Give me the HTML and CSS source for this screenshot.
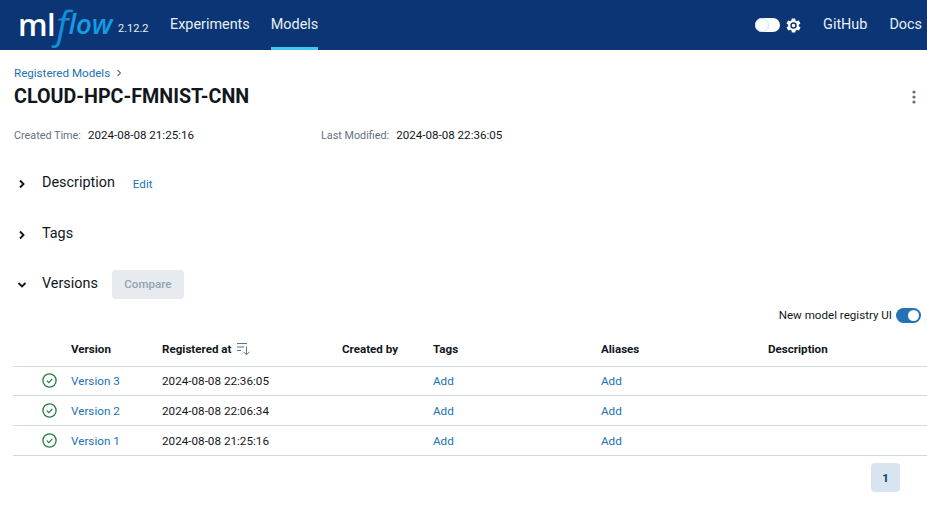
FILE: index.html
```html
<!DOCTYPE html>
<html lang="en">
<head>
<meta charset="utf-8">
<title>MLflow</title>
<link rel="stylesheet" href="styles.css">
</head>
<body>
<header class="topbar">
  <div class="logo"><span class="logo-ml">ml</span><span class="logo-f">f</span><span class="logo-flow">low</span></div>
  <span class="version-no">2.12.2</span>
  <nav class="nav-main">
    <a class="nav-link">Experiments</a>
    <a class="nav-link active">Models</a>
  </nav>
  <div class="nav-right">
    <span class="theme-switch"><span class="theme-knob"></span></span>
    <svg class="gear" width="17" height="17" viewBox="0 0 24 24"><path fill="#fff" fill-rule="evenodd" d="M19.4 13c.1-.3.1-.7.1-1s0-.7-.1-1l2.100-1.600c.2-.2.2-.4.1-.6l-2-3.500c-.1-.2-.4-.3-.6-.2l-2.500 1c-.5-.4-1.100-.7-1.700-1l-.4-2.600c0-.3-.2-.5-.5-.5h-4c-.3 0-.5.2-.5.500l-.4 2.600c-.6.300-1.200.600-1.700 1l-2.500-1c-.200-.100-.500 0-.600.200l-2 3.500c-.100.200-.100.500.100.600L4.600 11c-.1.300-.1.700-.1 1s0 .7.100 1l-2.100 1.600c-.2.200-.2.400-.1.600l2 3.500c.1.200.4.300.6.200l2.500-1c.5.400 1.100.700 1.700 1l.4 2.600c0 .3.200.5.500.5h4c.3 0 .5-.2.5-.5l.4-2.600c.6-.3 1.200-.6 1.700-1l2.500 1c.2.100.5 0 .6-.2l2-3.500c.1-.2.100-.5-.1-.6zM12 16.500a4.500 4.500 0 1 1 0-9 4.500 4.500 0 0 1 0 9zm0-2a2.500 2.500 0 1 0 0-5 2.500 2.500 0 0 0 0 5z"/></svg>
    <a class="nav-link ext github">GitHub</a>
    <a class="nav-link ext">Docs</a>
  </div>
</header>

<main class="page">
  <div class="breadcrumb"><a class="link">Registered Models</a><svg class="crumb-sep" width="8" height="8" viewBox="0 0 8 8"><path d="M2.500 1 5.500 4 2.500 7" fill="none" stroke="#5f7281" stroke-width="1.100"/></svg></div>
  <div class="title-row">
    <h1 class="title">CLOUD-HPC-FMNIST-CNN</h1>
    <svg class="kebab" width="4" height="14" viewBox="0 0 4 14"><circle cx="2" cy="2" r="1.600"/><circle cx="2" cy="7" r="1.600"/><circle cx="2" cy="12" r="1.600"/></svg>
  </div>
  <div class="meta">
    <div class="meta-item created"><span class="meta-label">Created Time:</span><span class="meta-value">2024-08-08 21:25:16</span></div>
    <div class="meta-item"><span class="meta-label">Last Modified:</span><span class="meta-value">2024-08-08 22:36:05</span></div>
  </div>

  <section class="section desc-section">
    <svg class="chev" width="10" height="10" viewBox="0 0 10 10"><path d="M3 1.500 6.500 5 3 8.500" fill="none" stroke="#11171c" stroke-width="1.900"/></svg>
    <h2 class="section-title">Description</h2>
    <a class="link edit">Edit</a>
  </section>
  <section class="section tags-section">
    <svg class="chev" width="10" height="10" viewBox="0 0 10 10"><path d="M3 1.500 6.500 5 3 8.500" fill="none" stroke="#11171c" stroke-width="1.900"/></svg>
    <h2 class="section-title">Tags</h2>
  </section>
  <section class="section versions-section">
    <svg class="chev" width="10" height="10" viewBox="0 0 10 10"><path d="M1.500 3 5 6.500 8.500 3" fill="none" stroke="#11171c" stroke-width="1.900"/></svg>
    <h2 class="section-title">Versions</h2>
    <button class="compare" disabled>Compare</button>
  </section>

  <div class="switch-row">
    <span class="switch-label">New model registry UI</span>
    <span class="switch"><span class="switch-knob"></span></span>
  </div>

  <div class="table">
    <div class="row head">
      <span></span>
      <span>Version</span>
      <span class="sort-head">Registered at <svg class="sort-icon" width="15" height="13" viewBox="0 0 15 13"><path d="M1 1.500h10M1 5h7M1 8.500h4" stroke="#5f7281" fill="none"/><path d="M10.500 4.500v8M7.500 9.800l3 3 3-3" stroke="#5f7281" fill="none"/></svg></span>
      <span>Created by</span>
      <span>Tags</span>
      <span>Aliases</span>
      <span>Description</span>
    </div>
    <div class="row">
      <span class="status"><svg width="15" height="15" viewBox="0 0 15 15"><circle cx="7.500" cy="7.500" r="6.600" fill="none" stroke="#277c43" stroke-width="1.300"/><path d="M4.800 7.700 6.800 9.700 10.300 5.800" fill="none" stroke="#277c43" stroke-width="1.200"/></svg></span>
      <a class="link">Version 3</a>
      <span>2024-08-08 22:36:05</span>
      <span></span>
      <a class="link">Add</a>
      <a class="link">Add</a>
      <span></span>
    </div>
    <div class="row">
      <span class="status"><svg width="15" height="15" viewBox="0 0 15 15"><circle cx="7.500" cy="7.500" r="6.600" fill="none" stroke="#277c43" stroke-width="1.300"/><path d="M4.800 7.700 6.800 9.700 10.300 5.800" fill="none" stroke="#277c43" stroke-width="1.200"/></svg></span>
      <a class="link">Version 2</a>
      <span>2024-08-08 22:06:34</span>
      <span></span>
      <a class="link">Add</a>
      <a class="link">Add</a>
      <span></span>
    </div>
    <div class="row">
      <span class="status"><svg width="15" height="15" viewBox="0 0 15 15"><circle cx="7.500" cy="7.500" r="6.600" fill="none" stroke="#277c43" stroke-width="1.300"/><path d="M4.800 7.700 6.800 9.700 10.300 5.800" fill="none" stroke="#277c43" stroke-width="1.200"/></svg></span>
      <a class="link">Version 1</a>
      <span>2024-08-08 21:25:16</span>
      <span></span>
      <a class="link">Add</a>
      <a class="link">Add</a>
      <span></span>
    </div>
  </div>

  <div class="pager"><span class="page-btn">1</span></div>
</main>
</body>
</html>
```

FILE: styles.css
```css
* { box-sizing: border-box; }
html, body { margin: 0; padding: 0; }
body {
  width: 927px;
  height: 507px;
  overflow: hidden;
  background: #fff;
  color: #11171c;
  font-family: Roboto, "Liberation Sans", sans-serif;
  font-size: 13px;
  line-height: 20px;
}
.topbar {
  height: 50px;
  background: #0b3574;
  display: flex;
  align-items: center;
  color: #e6f1f5;
  padding-left: 18px;
}
.logo {
  width: 100px;
  height: 50px;
  display: flex;
  align-items: center;
  white-space: nowrap;
}
.logo-ml {
  font-family: "Open Sans", sans-serif;
  font-size: 31px;
  font-weight: 600;
  color: #fff;
  letter-spacing: -0.5px;
  line-height: 50px;
  margin-top: -3px;
}
.logo-f {
  font-family: "Open Sans", sans-serif;
  font-style: italic;
  font-size: 39px;
  font-weight: 500;
  color: #0f8fd6;
  line-height: 50px;
  padding: 0 6px;
  margin: -3px -6px 0 -5px;
}
.logo-flow {
  font-family: "Open Sans", sans-serif;
  font-style: italic;
  font-size: 27.500px;
  font-weight: 600;
  line-height: 50px;
  margin-top: -3px;
  color: #159ce4;
}
.version-no {
  font-size: 11px;
  margin-top: 8px;
  width: 52px;
  color: #e6f1f5;
}
.nav-main { display: flex; gap: 21px; height: 50px; }
.nav-link {
  font-size: 14.400px;
  line-height: 49px;
  height: 50px;
  display: block;
  color: #e6f1f5;
}
.nav-link.active { border-bottom: 3px solid #43c9ed; }
.nav-right {
  margin-left: auto;
  display: flex;
  align-items: center;
  height: 50px;
  gap: 22px;
  padding-right: 5px;
}
.theme-switch {
  width: 25px;
  height: 14px;
  border-radius: 7px;
  background: #fff;
  display: block;
  margin-right: -17px;
}
.theme-knob {
  display: block;
  width: 14px;
  height: 14px;
  border-radius: 50%;
  border: 1px solid #d5dfe8;
  background: #fff;
}
.github { margin-left: -1px; }

.page { padding: 0 6px 0 14px; }
.link { color: #2272b4; }
.breadcrumb {
  height: 20px;
  margin-top: 13px;
  font-size: 11.600px;
  display: flex;
  align-items: center;
  gap: 5px;
  line-height: 20px;
}
.title-row {
  display: flex;
  justify-content: space-between;
  align-items: center;
  height: 26px;
  margin-top: 1px;
}
.title {
  margin: 0;
  font-size: 19.700px;
  font-weight: 700;
  line-height: 26px;
  color: #11171c;
}
.kebab { fill: #5f7281; margin-right: 5px; }
.meta { display: flex; margin-top: 15px; height: 20px; font-size: 11.600px; }
.meta-item { display: flex; gap: 7px; align-items: baseline; }
.meta-item.created { width: 307px; }
.meta-label { color: #5f7281; font-size: 10.800px; }
.meta-value { color: #11171c; }
.section {
  display: flex;
  align-items: center;
  height: 32px;
}
.chev { margin: 2px 0 0 3px; }
.section-title {
  margin: 0 0 0 15px;
  font-size: 14.400px;
  font-weight: 400;
  line-height: 20px;
}
.desc-section { margin-top: 22px; }
.tags-section { margin-top: 19px; }
.versions-section { margin-top: 18px; }
.edit { margin-left: 18px; font-size: 11.600px; margin-top: 1px; }
.compare {
  margin: 0 0 0 14px;
  width: 72px;
  height: 29px;
  border: 0;
  border-radius: 4px;
  background: #e7eaee;
  color: #92a4b3;
  font: 500 11.600px Roboto, sans-serif;
}
.switch-row {
  display: flex;
  justify-content: flex-end;
  align-items: center;
  gap: 4px;
  height: 20px;
  margin-top: 5px;
  font-size: 11.600px;
  color: #11171c;
}
.switch {
  width: 25px;
  height: 15px;
  border-radius: 8px;
  background: #2272b4;
  display: flex;
  justify-content: flex-end;
  padding: 2px;
}
.switch-knob { width: 11px; height: 11px; border-radius: 50%; background: #fff; }
.table { margin: 10px -6px 0 -1px; font-size: 11.700px; }
.row {
  display: grid;
  grid-template-columns: 58px 91px 180px 91px 168px 167px 1fr;
  align-items: center;
  height: 30px;
  border-bottom: 1px solid #d1d9e1;
}
.row.head {
  height: 32px;
  padding-bottom: 3px;
  font-weight: 700;
  font-size: 11.600px;
}
.row.head + .row { height: 29px; }
.sort-head { display: flex; align-items: center; gap: 5px; }
.sort-icon { margin-top: -1px; }
.status { display: flex; justify-content: flex-end; padding-right: 14px; }
.status svg { display: block; margin-top: -1px; }
.pager { display: flex; justify-content: flex-end; margin: 7px 21px 0 0; }
.page-btn {
  width: 29px;
  height: 29px;
  border-radius: 4px;
  background: #d8e5f1;
  color: #0e3a5c;
  font-weight: 700;
  font-size: 11.500px;
  display: flex;
  align-items: center;
  justify-content: center;
}
```
